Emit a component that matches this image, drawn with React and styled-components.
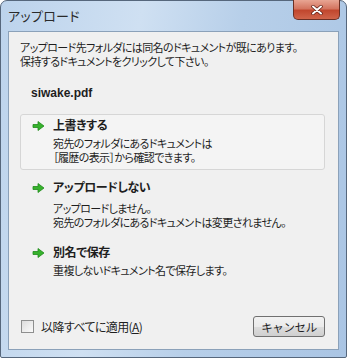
import React from 'react';
import styled, { createGlobalStyle } from 'styled-components';

const GlobalStyle = createGlobalStyle`
	html, body {
		margin: 0;
		padding: 0;
		background: #ffffff;
	}
	body {
		font-family: "Noto Sans CJK JP", "Liberation Sans", sans-serif;
		font-feature-settings: "palt";
		color: #1e1e1e;
	}
`;

const Window = styled.div`
	box-sizing: border-box;
	width: 347px;
	height: 358px;
	display: flex;
	flex-direction: column;
	padding: 0 7px 7px;
	border: 1px solid #56677c;
	border-radius: 7px 7px 2px 2px;
	background: linear-gradient(100deg, #bcd3ec 0%, #cfe0f2 35%, #b7cfe9 60%, #aac5e4 100%);
`;

const TitleBar = styled.div`
	height: 30px;
	display: flex;
	align-items: flex-start;
	justify-content: space-between;
`;

const Title = styled.div`
	margin-top: 5px;
	font-size: 13px;
	color: #2a2a2a;
	letter-spacing: 0.3px;
`;

const CloseButton = styled.div`
	width: 45px;
	height: 19px;
	margin-right: -1px;
	margin-top: -1px;
	display: flex;
	align-items: center;
	justify-content: center;
	border: 1px solid #6b2f24;
	border-top: none;
	border-radius: 0 0 5px 5px;
	background: linear-gradient(#e8a593 0%, #d47560 45%, #c1472e 55%, #d0644a 100%);
`;

const Panel = styled.div`
	flex: 1;
	display: flex;
	flex-direction: column;
	background: #f0f0f0;
	border: 1px solid #8ba1b9;
	padding: 8px 13px 12px 11px;
	font-size: 11px;
	line-height: 14px;
	letter-spacing: -0.6px;
	white-space: nowrap;
`;

const Message = styled.p`
	margin: 0;
`;

const FileName = styled.div`
	margin: 18px 0 0 11px;
	font-weight: bold;
	font-size: 12px;
	letter-spacing: 0;
	font-family: "Liberation Sans", sans-serif;
`;

const Options = styled.div`
	margin-top: 14px;
	display: flex;
	flex-direction: column;
	gap: 6px;
`;

const Option = styled.div`
	display: flex;
	gap: 8px;
	padding: 3px 10px 5px 11px;
	border: 1px solid ${({ $active }) => ($active ? '#d6d6d6' : 'transparent')};
	border-radius: 3px;
	background: ${({ $active }) => ($active ? '#f4f4f4' : 'transparent')};
`;

const Arrow = styled.svg`
	flex: none;
	margin-top: 2px;
`;

const OptionBody = styled.div`
	display: flex;
	flex-direction: column;
`;

const OptionTitle = styled.div`
	font-weight: bold;
	font-size: 12px;
	line-height: 14px;
	letter-spacing: -0.4px;
	margin-bottom: ${({ $gap }) => $gap}px;
`;

const Footer = styled.div`
	margin-top: auto;
	display: flex;
	align-items: center;
	justify-content: space-between;
	padding-left: 1px;
`;

const CheckLabel = styled.label`
	display: flex;
	align-items: center;
	gap: 7px;
	font-size: 12px;
`;

const Box = styled.span`
	width: 11px;
	height: 11px;
	border: 1px solid #8e8f8f;
	background: linear-gradient(135deg, #dcdcdc, #fbfbfb);
`;

const Underline = styled.span`
	text-decoration: underline;
`;

const Button = styled.button`
	width: 72px;
	height: 21px;
	padding: 0;
	font-family: inherit;
	font-size: 11.5px;
	letter-spacing: -0.4px;
	color: #1e1e1e;
	border: 1px solid #707070;
	border-radius: 3px;
	background: linear-gradient(#f2f2f2 0%, #ebebeb 50%, #dddddd 51%, #cfcfcf 100%);
`;

const GreenArrow = () => (
	<Arrow width="13" height="12" viewBox="0 0 13 12">
		<path d="M1 4.5h5V1.5L12 6l-6 4.5v-3H1z" fill="#36b22c" stroke="#1f8a1a" strokeWidth="0.8" strokeLinejoin="round" />
	</Arrow>
);

const options = [
	{ title: '上書きする', gap: 4, lines: ['宛先のフォルダにあるドキュメントは', '［履歴の表示］から確認できます。'], active: true },
	{ title: 'アップロードしない', gap: 7, lines: ['アップロードしません。', '宛先のフォルダにあるドキュメントは変更されません。'] },
	{ title: '別名で保存', gap: 4, lines: ['重複しないドキュメント名で保存します。'] },
];

const App = () => (
	<>
		<GlobalStyle />
		<Window>
			<TitleBar>
				<Title>アップロード</Title>
				<CloseButton>
					<svg width="12" height="10" viewBox="0 0 12 10">
						<path d="M2 1.5l8 7M10 1.5l-8 7" stroke="#5a1a10" strokeWidth="3.4" strokeLinecap="round" />
						<path d="M2 1.5l8 7M10 1.5l-8 7" stroke="#ffffff" strokeWidth="2" strokeLinecap="round" />
					</svg>
				</CloseButton>
			</TitleBar>
			<Panel>
				<Message>
					アップロード先フォルダには同名のドキュメントが既にあります。
					<br />
					保持するドキュメントをクリックして下さい。
				</Message>
				<FileName>siwake.pdf</FileName>
				<Options>
					{options.map((opt) => (
						<Option key={opt.title} $active={opt.active}>
							<GreenArrow />
							<OptionBody>
								<OptionTitle $gap={opt.gap}>{opt.title}</OptionTitle>
								{opt.lines.map((line) => (
									<div key={line}>{line}</div>
								))}
							</OptionBody>
						</Option>
					))}
				</Options>
				<Footer>
					<CheckLabel>
						<Box />
						<span>
							以降すべてに適用(<Underline>A</Underline>)
						</span>
					</CheckLabel>
					<Button>キャンセル</Button>
				</Footer>
			</Panel>
		</Window>
	</>
);

export default App;
